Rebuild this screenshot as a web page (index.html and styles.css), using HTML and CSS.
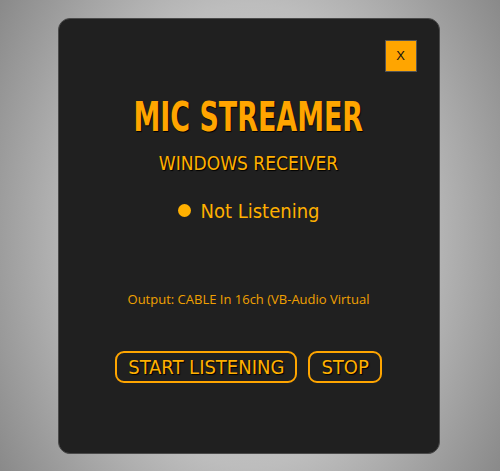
FILE: index.html
```html
<!DOCTYPE html>
<html>
<head>
<meta charset="utf-8">
<link rel="stylesheet" href="styles.css">
</head>
<body>
<div class="card">
  <div class="topbar"><button class="close">X</button></div>
  <h1 class="title">MIC STREAMER</h1>
  <h2 class="subtitle">WINDOWS RECEIVER</h2>
  <div class="status"><span class="dot"></span><span class="status-text">Not Listening</span></div>
  <p class="output">Output: CABLE In 16ch (VB-Audio Virtual</p>
  <div class="actions">
    <button class="btn">START LISTENING</button>
    <button class="btn">STOP</button>
  </div>
</div>
</body>
</html>
```
FILE: styles.css
```css
html, body { margin: 0; height: 100%; }
body {
  background: radial-gradient(ellipse 300px 420px at center, #d8d8d8 0%, #bdbdbd 55%, #8a8a8a 100%);
  display: flex;
  align-items: center;
  justify-content: center;
  font-family: "DejaVu Sans", sans-serif;
}
.card {
  width: 382px;
  height: 436px;
  margin-left: -3px;
  background: #202020;
  border: 1px solid #4a4a4a;
  border-radius: 12px;
  box-sizing: border-box;
  padding: 21px 22px 0 22px;
  display: flex;
  flex-direction: column;
  align-items: center;
}
.topbar { align-self: stretch; display: flex; justify-content: flex-end; }
.close {
  width: 32px; height: 32px;
  background: #ffa500;
  border: 1px solid #555;
  color: #111;
  font-family: "Liberation Sans", sans-serif;
  font-size: 13px;
  padding: 0;
}
.title {
  margin: 23px 0 0;
  font-family: "DejaVu Sans Condensed", sans-serif;
  font-weight: bold;
  font-size: 41px;
  line-height: 44px;
  color: #ffa500;
  text-shadow: 1px 1px 1px #000;
  transform: scaleX(0.73);
  white-space: nowrap;
}
.subtitle {
  margin: 12px 0 0;
  font-family: "DejaVu Sans Condensed", sans-serif;
  font-weight: normal;
  font-size: 19px;
  line-height: 24px;
  color: #ffb000;
  text-shadow: 1px 1px 1px #000;
}
.status { display: flex; align-items: center; margin-top: 23px; gap: 10px; }
.dot { width: 13px; height: 13px; border-radius: 50%; background: #ffb000; }
.status-text {
  font-family: "DejaVu Sans Condensed", sans-serif;
  font-size: 20px;
  line-height: 26px;
  color: #ffb000;
}
.output {
  margin: 66px 0 0;
  font-family: "Open Sans", sans-serif;
  font-size: 13px;
  color: #f0a000;
}
.actions { display: flex; gap: 11px; margin-top: 43px; }
.btn {
  height: 32px;
  background: transparent;
  border: 2px solid #ffa500;
  border-radius: 9px;
  color: #ffb000;
  font-family: "DejaVu Sans Condensed", sans-serif;
  font-size: 20px;
  padding: 0 11px;
  text-shadow: 1px 1px 1px #000;
}
```
